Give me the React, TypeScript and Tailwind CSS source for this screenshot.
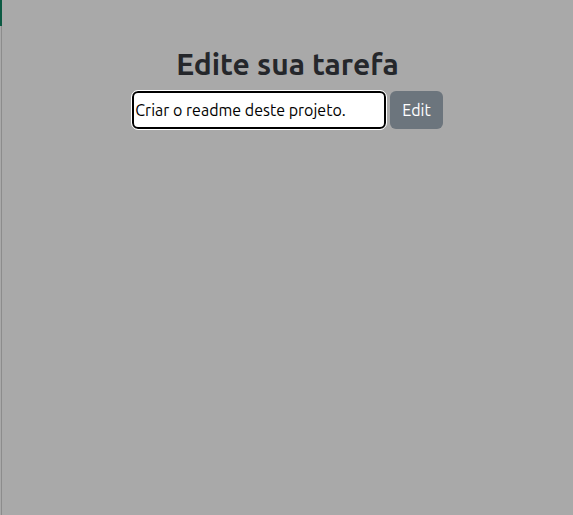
export default function App() {
  return (
    <div className="flex h-[515px] w-full bg-[#a9a9a9] font-['Ubuntu','Noto_Sans',sans-serif]">
      {/* sliver of the page behind the overlay */}
      <div className="flex w-[2px] flex-col">
        <div className="h-[26px] bg-[#0c5a43]" />
        <div className="flex-1 border-r border-[#8c8c8c]" />
      </div>

      <div className="flex flex-1 flex-col items-center pt-[44px]">
        <h1 className="text-[30px] font-bold leading-[40px] text-[#25272b]">Edite sua tarefa</h1>
        <div className="mt-[7px] flex gap-[4px]">
          <input
            defaultValue="Criar o readme deste projeto."
            className="h-[38px] w-[254px] rounded-[6px] border-2 border-black bg-white px-[1px] text-[16px] text-black outline outline-1 outline-white"
          />
          <button className="h-[38px] rounded-[6px] bg-[#6c757d] px-[12px] text-[16px] text-white">Edit</button>
        </div>
      </div>
    </div>
  )
}
